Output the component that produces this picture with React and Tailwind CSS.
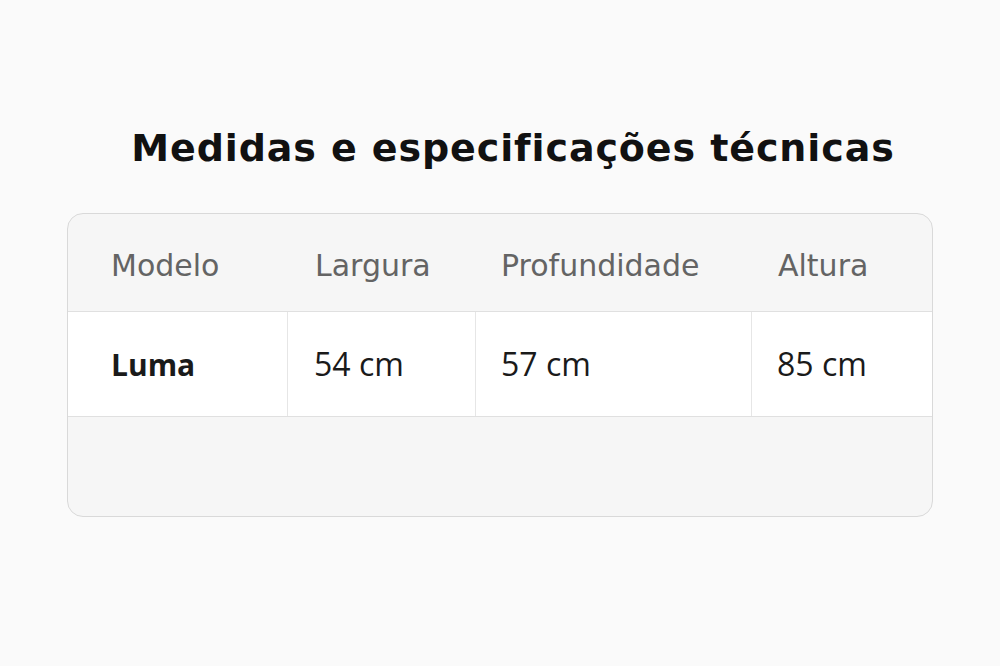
const headers = ["Modelo", "Largura", "Profundidade", "Altura"];
const values = ["54 cm", "57 cm", "85 cm"];

export default function App() {
  return (
    <div className="w-[1000px] h-[666px] bg-[#fafafa] flex flex-col items-center">
      <h1 className="mt-[123px] pl-[26px] text-[38px] leading-[50px] tracking-[0.9px] font-bold text-[#111] font-['DejaVu_Sans',sans-serif]">
        Medidas e especificações técnicas
      </h1>

      <div className="mt-[40px] w-[866px] rounded-[16px] border border-[#d9d9d9] overflow-hidden bg-[#f6f6f6]">
        {/* Header */}
        <div className="grid grid-cols-[220px_188px_276px_1fr] h-[98px] pt-[6px] items-center text-[30px] text-[#646464] font-['DejaVu_Sans',sans-serif] border-b border-[#e0e0e0]">
          <div className="pl-[43px]">{headers[0]}</div>
          <div className="pl-[27px]">{headers[1]}</div>
          <div className="pl-[25px]">{headers[2]}</div>
          <div className="pl-[26px]">{headers[3]}</div>
        </div>

        {/* Row */}
        <div className="grid grid-cols-[220px_188px_276px_1fr] h-[105px] bg-white text-[32px] text-[#1a1a1a] font-['Open_Sans',sans-serif] border-b border-[#e0e0e0]">
          <div className="pl-[43px] flex items-center font-bold text-[30px] border-r border-[#e6e6e6]">Luma</div>
          <div className="pl-[26px] flex items-center border-r border-[#e6e6e6]">{values[0]}</div>
          <div className="pl-[25px] flex items-center border-r border-[#e6e6e6]">{values[1]}</div>
          <div className="pl-[25px] flex items-center">{values[2]}</div>
        </div>

        {/* Empty footer */}
        <div className="h-[99px]"></div>
      </div>
    </div>
  );
}
